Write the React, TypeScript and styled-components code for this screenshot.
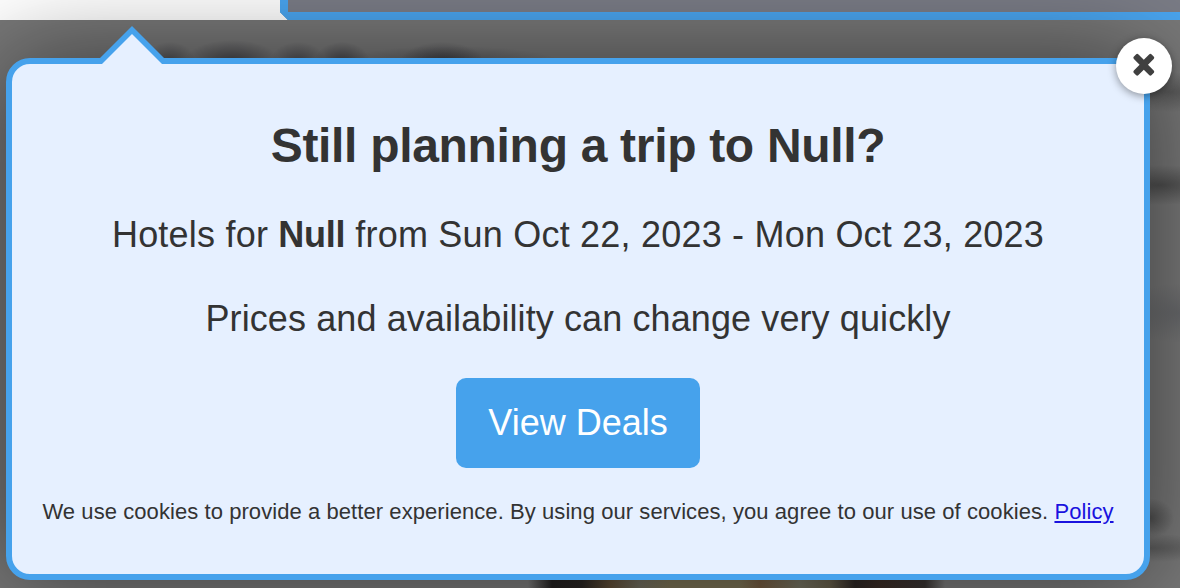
import React from "react";
import styled, { createGlobalStyle } from "styled-components";

const GlobalStyle = createGlobalStyle`
  * { box-sizing: border-box; }
  body {
    margin: 0;
    overflow: hidden;
    font-family: "Liberation Sans", Helvetica, Arial, sans-serif;
    color: #333;
  }
`;

const Page = styled.div`
  display: flex;
  flex-direction: column;
  width: 1180px;
  height: 588px;
  overflow: hidden;
`;

const TopStrip = styled.header`
  display: flex;
  flex: 0 0 20px;
  background: #fff;
`;

const StripPanel = styled.div`
  flex: 1;
  margin-left: 280px;
  border: solid #4aa5ef;
  border-width: 0 0 8px 8px;
  background: #7a7c86;
  clip-path: polygon(0 0, 100% 0, 100% 100%, 8px 100%, 0 12px);
`;

const Backdrop = styled.main`
  display: flex;
  flex: 1;
  padding: 38px 30px 8px 6px;
  background:
    radial-gradient(26px 20px at 170px 42px, rgba(35, 35, 42, 0.5), transparent),
    radial-gradient(48px 22px at 232px 42px, rgba(35, 35, 42, 0.6), transparent),
    radial-gradient(28px 20px at 298px 42px, rgba(35, 35, 42, 0.5), transparent),
    radial-gradient(28px 20px at 342px 42px, rgba(35, 35, 42, 0.6), transparent),
    radial-gradient(42px 20px at 442px 42px, rgba(35, 35, 42, 0.55), transparent),
    radial-gradient(110px 16px at 450px 42px, rgba(35, 35, 42, 0.35), transparent),
    radial-gradient(60px 20px at 1170px 72px, rgba(20, 20, 20, 0.3), transparent),
    radial-gradient(80px 20px at 1160px 165px, rgba(20, 20, 20, 0.4), transparent),
    radial-gradient(60px 30px at 1180px 293px, rgba(60, 65, 75, 0.25), transparent),
    radial-gradient(24px 20px at 1150px 498px, rgba(20, 20, 20, 0.4), transparent),
    radial-gradient(80px 14px at 1150px 528px, rgba(20, 20, 20, 0.28), transparent),
    linear-gradient(90deg, transparent 528px, #222020 552px, #282422 582px, #5c4a34 610px, #6e6a5c 640px, #786f52 670px, #786f52 740px, #70583e 760px, #72705f 800px, #645c48 830px, #2c2624 855px, #3a2c26 880px, #383332 925px, transparent 945px)
      0 100% / 100% 16px no-repeat,
    #787878;
`;

const Card = styled.section`
  position: relative;
  display: flex;
  flex: 1;
  flex-direction: column;
  align-items: center;
  padding-top: 54px;
  border: 6px solid #46a2ec;
  border-radius: 24px;
  background: #e6f0ff;
  box-shadow: 0 0 100px rgba(0, 0, 0, 0.52);
  white-space: nowrap;
`;

const Pointer = styled.svg`
  position: absolute;
  left: 86px;
  top: -38px;
`;

const CloseButton = styled.button`
  position: absolute;
  top: -26px;
  right: -28px;
  display: flex;
  align-items: center;
  justify-content: center;
  width: 56px;
  height: 56px;
  padding: 0 1px 2px 0;
  border: 0;
  border-radius: 50%;
  background: #fff;
  box-shadow: 0 2px 8px rgba(0, 0, 0, 0.4);
`;

const Title = styled.h1`
  margin: 0;
  font-size: 48px;
  line-height: 56px;
  font-weight: 700;
  letter-spacing: -0.31px;
`;

const Details = styled.p<{ $tracking: number }>`
  margin: 0 0 40px;
  font-size: 36px;
  line-height: 44px;
  letter-spacing: ${(p) => p.$tracking}px;

  ${Title} + & {
    margin-top: 39px;
  }

  b {
    letter-spacing: -0.3px;
  }
`;

const DealsButton = styled.button`
  width: 244px;
  height: 90px;
  margin-top: -3px;
  padding: 0;
  border: 0;
  border-radius: 10px;
  background: #46a2ec;
  color: #fff;
  font: 36px/44px "Liberation Sans", Helvetica, Arial, sans-serif;
`;

const CookieNote = styled.p`
  margin: 31px 0 0;
  font-size: 22px;
  line-height: 26px;
  letter-spacing: 0.07px;
`;

const PolicyLink = styled.a`
  color: #1a12de;
  text-decoration: underline;
`;

export default function App() {
  return (
    <>
      <GlobalStyle />
      <Page>
        <TopStrip>
          <StripPanel />
        </TopStrip>
        <Backdrop>
          <Card>
            <Pointer width="68" height="38" viewBox="0 0 68 38" aria-hidden="true">
              <path d="M0 34 34 0 68 34V38H0Z" fill="#46a2ec" />
              <path d="M4 38 34 8 64 38Z" fill="#e6f0ff" />
            </Pointer>
            <CloseButton aria-label="Close">
              <svg width="24" height="24" viewBox="0 0 24 24" aria-hidden="true">
                <path
                  d="M4.2 1.2Q5.3 .4 6.5 1.5L11.8 6.8 17.1 1.5Q18.3 .4 19.4 1.2L21.9 3.7Q22.8 4.8 21.7 6L16 11.8 21.7 17.5Q22.8 18.7 21.9 19.8L19.4 22.3Q18.3 23.2 17.1 22.1L11.8 16.8 6.5 22.1Q5.3 23.2 4.2 22.3L1.7 19.8Q.8 18.7 1.9 17.5L7.6 11.8 1.9 6Q.8 4.8 1.7 3.7Z"
                  fill="#404040"
                />
              </svg>
            </CloseButton>
            <Title>Still planning a trip to Null?</Title>
            <Details $tracking={0.21}>
              Hotels for <b>Null</b> from Sun Oct 22, 2023 - Mon Oct 23, 2023
            </Details>
            <Details $tracking={0.1}>Prices and availability can change very quickly</Details>
            <DealsButton>View Deals</DealsButton>
            <CookieNote>
              We use cookies to provide a better experience. By using our services, you agree to our use of cookies.{" "}
              <PolicyLink>Policy</PolicyLink>
            </CookieNote>
          </Card>
        </Backdrop>
      </Page>
    </>
  );
}
